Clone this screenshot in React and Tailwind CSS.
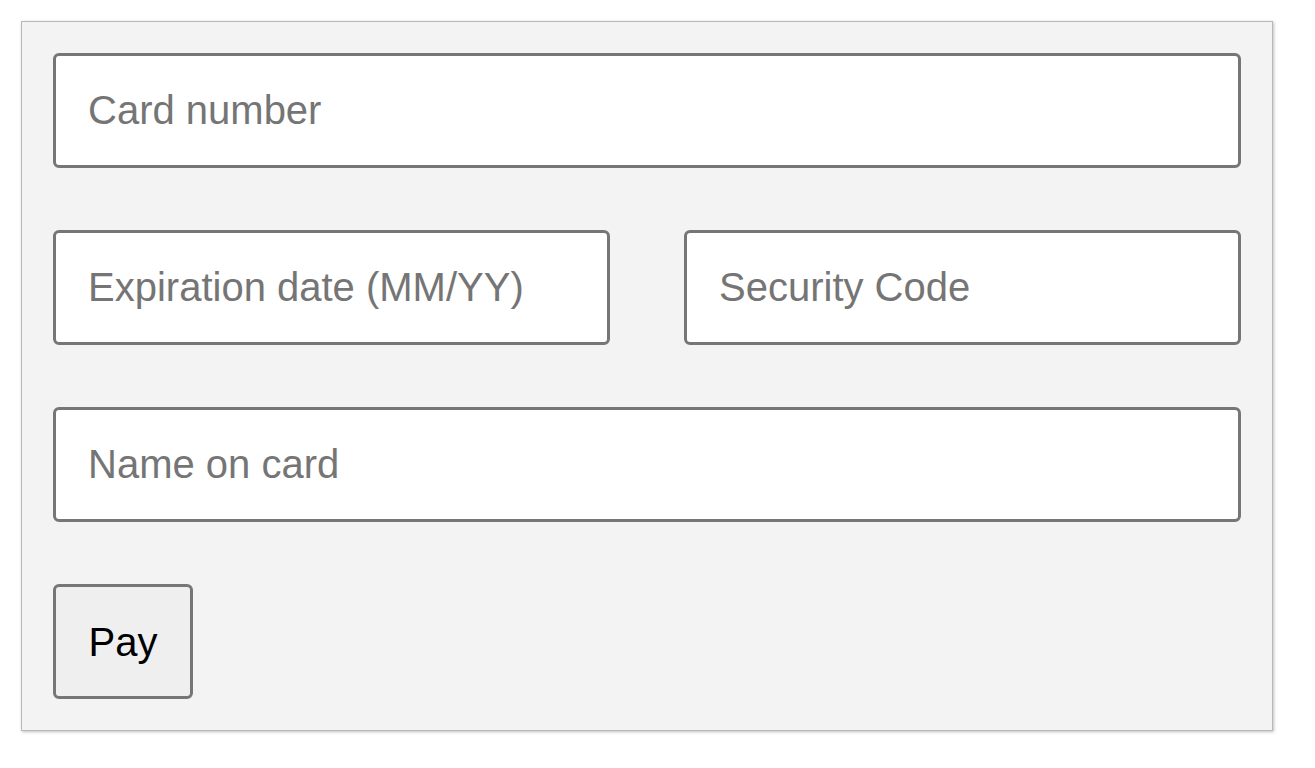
const inputCls =
  "h-[115px] w-full rounded-[6px] border-[3px] border-[#767676] bg-white px-[32px] text-[40px] text-black placeholder:text-[#757575] outline-none";

export default function App() {
  return (
    <div className="min-h-screen bg-white p-[21px]" style={{ fontFamily: '"Liberation Sans", Arial, sans-serif' }}>
      <form className="flex w-[1252px] flex-col gap-[62px] border border-[#b8b8b8] bg-[#f3f3f3] p-[31px] shadow-[1px_1px_3px_rgba(0,0,0,0.25)]">
        <input className={inputCls} placeholder="Card number" />
        <div className="flex gap-[74px]">
          <input className={inputCls} placeholder="Expiration date (MM/YY)" />
          <input className={inputCls} placeholder="Security Code" />
        </div>
        <input className={inputCls} placeholder="Name on card" />
        <div>
          <button
            type="button"
            className="h-[115px] w-[140px] rounded-[6px] border-[3px] border-[#767676] bg-[#efefef] text-[40px] text-black"
          >
            Pay
          </button>
        </div>
      </form>
    </div>
  );
}
